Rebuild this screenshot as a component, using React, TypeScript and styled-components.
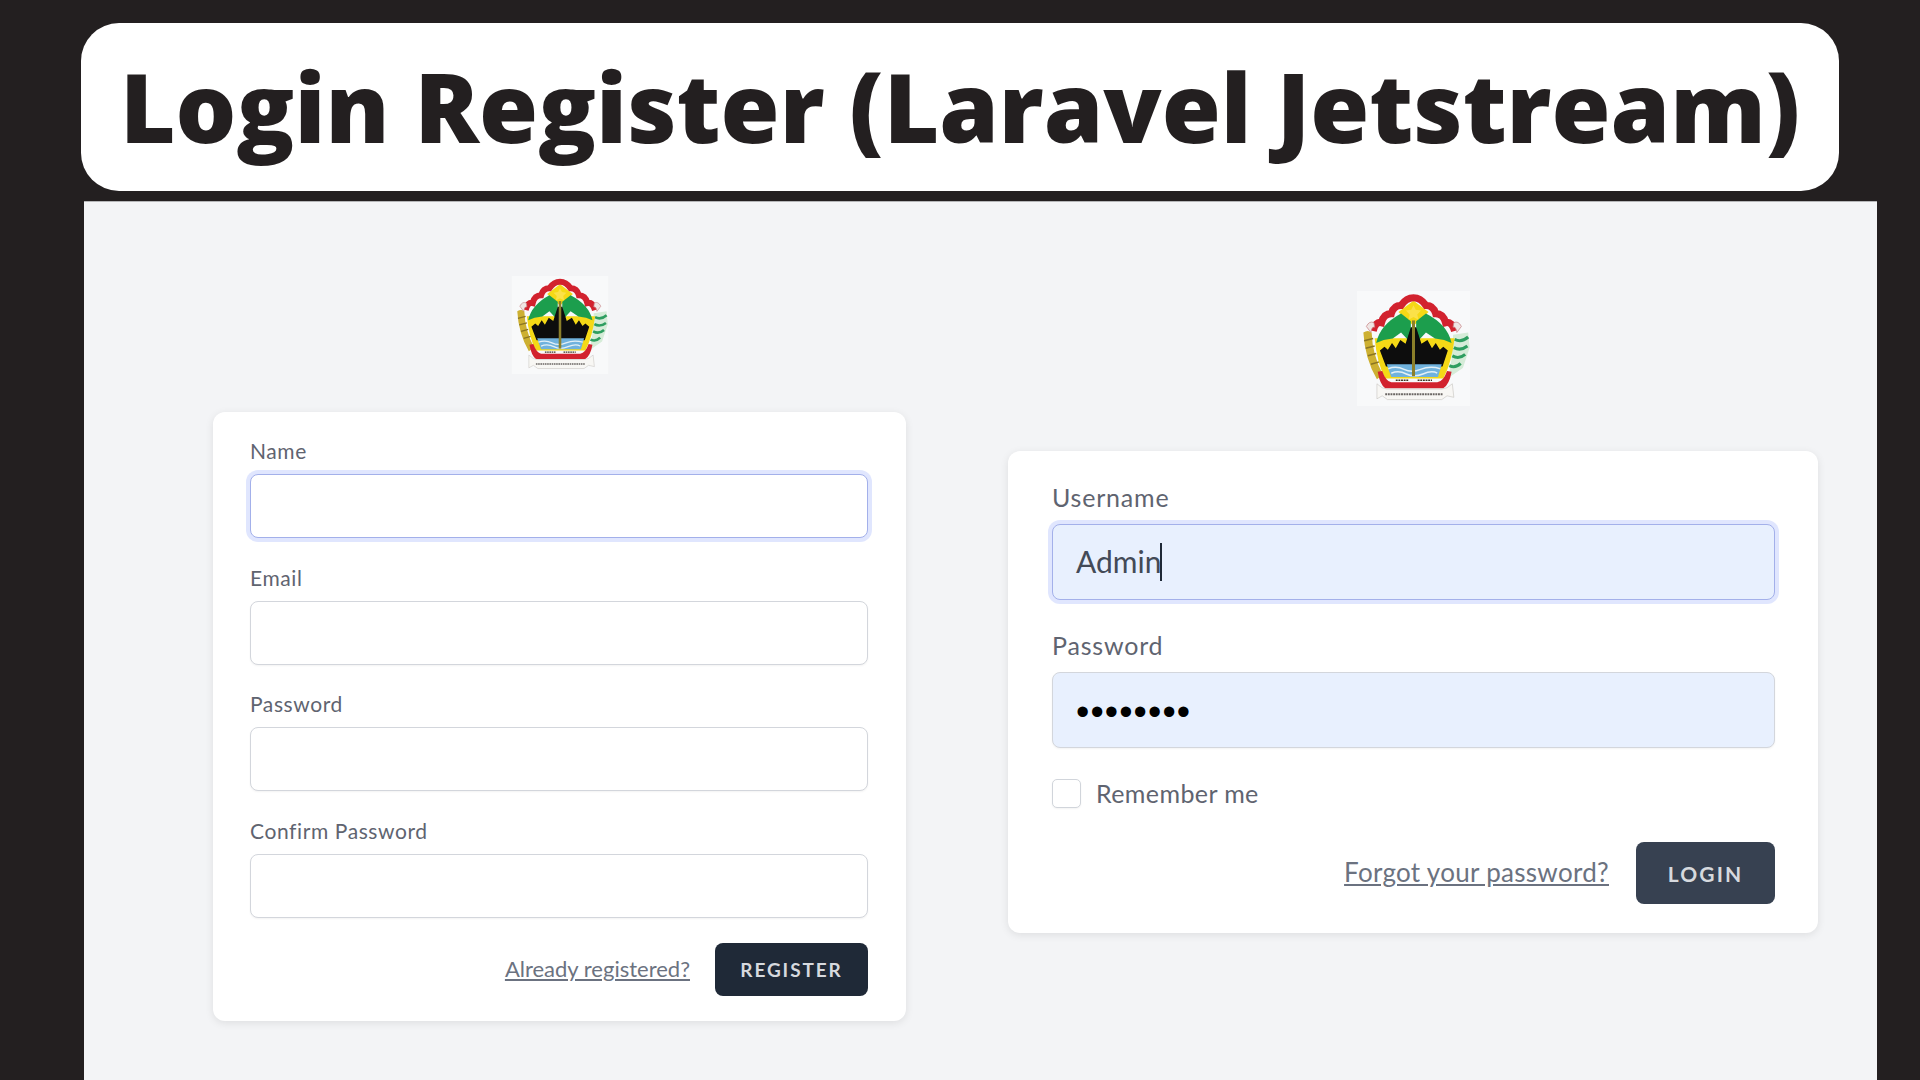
import React, { FC, useId } from 'react';
import styled, { createGlobalStyle } from 'styled-components';

const GlobalStyle = createGlobalStyle`
  html, body {
    margin: 0;
    height: 100%;
    background: #231f20;
    overflow: hidden;
  }
  * {
    box-sizing: border-box;
  }
`;

const Page = styled.div`
  width: 1920px;
  height: 1080px;
  padding-top: 23px;
  background: #231f20;
  overflow: hidden;
`;

const Banner = styled.div`
  width: 1758px;
  height: 168px;
  margin-left: 81px;
  border-radius: 38px;
  background: #fff;
  display: flex;
  align-items: center;
  justify-content: center;
`;

const Title = styled.h1`
  margin: 0;
  font-family: "Open Sans", sans-serif;
  font-weight: 800;
  font-size: 95.6px;
  line-height: 1;
  white-space: nowrap;
  color: #231f20;
`;

const Panel = styled.div`
  width: 1793px;
  height: 879px;
  margin: 10px 0 0 84px;
  padding-left: 129px;
  background: #f3f4f6;
  border-top: 1px solid #b5b6b8;
  display: flex;
  align-items: flex-start;
  gap: 102px;
  font-family: "Lato", sans-serif;
`;

const Column = styled.div<{ $width: number; $top: number; $gap: number }>`
  width: ${p => p.$width}px;
  padding-top: ${p => p.$top}px;
  display: flex;
  flex-direction: column;
  align-items: center;
  gap: ${p => p.$gap}px;
`;

const Card = styled.div<{ $left: number; $right: number; $height: number }>`
  width: 100%;
  height: ${p => p.$height}px;
  padding: 0 ${p => p.$right}px 0 ${p => p.$left}px;
  background: #fff;
  border-radius: 12px;
  box-shadow: 0 2px 8px rgba(0, 0, 0, 0.09);
  display: flex;
  flex-direction: column;
`;

const Group = styled.div<{ $top: number; $gap: number }>`
  margin-top: ${p => p.$top}px;
  display: flex;
  flex-direction: column;
  gap: ${p => p.$gap}px;
`;

const Label = styled.label<{ $big?: boolean }>`
  font-size: ${p => (p.$big ? 25 : 21)}px;
  line-height: ${p => (p.$big ? 28 : 24)}px;
  letter-spacing: ${p => (p.$big ? 0.8 : 0.6)}px;
  color: #5f6470;
`;

const Field = styled.div<{ $big?: boolean; $focus?: boolean; $filled?: boolean }>`
  height: ${p => (p.$big ? 76 : 64)}px;
  padding: 0 23px;
  border-radius: 8px;
  border: 1.5px solid ${p => (p.$focus ? '#a3b0ea' : '#d3d6dc')};
  background: ${p => (p.$filled ? '#e8f0fe' : '#fff')};
  box-shadow: ${p => (p.$focus ? '0 0 0 4px rgba(199, 210, 254, 0.55)' : '0 1px 2px rgba(0, 0, 0, 0.05)')};
  display: flex;
  align-items: center;
  font-size: 30px;
  color: #434a57;
`;

const FieldText = styled.span`
  margin-bottom: 2px;
`;

const Caret = styled.span`
  width: 2px;
  height: 38px;
  margin-left: -1px;
  background: #1f2937;
`;

const Dots = styled.span`
  margin-top: 4px;
  font-family: "Liberation Sans", sans-serif;
  font-size: 38px;
  letter-spacing: 1.1px;
  color: #000;
`;

const RememberRow = styled.div`
  margin-top: 30px;
  display: flex;
  align-items: center;
  gap: 15px;
`;

const Checkbox = styled.span`
  width: 29px;
  height: 29px;
  border-radius: 5px;
  border: 1.5px solid #d1d5db;
  background: #fff;
  box-shadow: 0 1px 2px rgba(0, 0, 0, 0.05);
`;

const RememberText = styled.span`
  font-size: 25px;
  letter-spacing: 0.4px;
  color: #5f6470;
`;

const Actions = styled.div<{ $top: number; $gap: number }>`
  margin-top: ${p => p.$top}px;
  display: flex;
  align-items: center;
  justify-content: flex-end;
  gap: ${p => p.$gap}px;
`;

const TextLink = styled.a<{ $big?: boolean }>`
  margin-bottom: 3px;
  font-size: ${p => (p.$big ? 26 : 22)}px;
  letter-spacing: ${p => (p.$big ? 0.3 : 0)}px;
  color: #6b7280;
  text-decoration: underline;
  text-underline-offset: 2px;
  white-space: nowrap;
`;

const Button = styled.button<{ $width: number; $height: number; $bg: string; $size: number }>`
  width: ${p => p.$width}px;
  height: ${p => p.$height}px;
  border: 0;
  border-radius: 8px;
  background: ${p => p.$bg};
  color: #d6d9de;
  font-family: "Lato", sans-serif;
  font-weight: 700;
  font-size: ${p => p.$size}px;
  letter-spacing: 0.1em;
  padding: 0;
`;

const LogoSvg = styled.svg<{ $size: number }>`
  width: ${p => p.$size}px;
  height: ${p => p.$size}px;
  display: block;
`;

const Logo: FC<{ size: number }> = ({ size }) => {
  const blurId = useId();
  return (
    <LogoSvg $size={size} viewBox="55 40 300 305">
      <defs>
        <filter id={blurId} x="-5%" y="-5%" width="110%" height="110%">
          <feGaussianBlur stdDeviation="1.8" />
        </filter>
      </defs>
      <rect x="55" y="40" width="300" height="305" fill="#f8f9fa" />
      <g filter={`url(#${blurId})`}>
        {/* rice stalk */}
        <path d="M72 150 Q84 142 94 150 Q96 210 124 262 L108 274 Q76 220 72 150Z" fill="#cdb030" />
        <path d="M74 172 L98 166 M78 192 L102 186 M84 212 L106 206 M92 234 L114 228" stroke="#8a7424" strokeWidth="4" />
        {/* cotton */}
        <path d="M310 156 L350 150 L354 190 L336 244 L298 270 L306 220Z" fill="#d6ecd8" />
        <path d="M314 168 Q332 178 350 162 M312 190 Q330 200 348 186 M308 212 Q326 222 342 208 M300 238 Q316 246 330 232" stroke="#2f9e60" strokeWidth="8" fill="none" />
        {/* yellow body */}
        <path d="M102 165 Q108 230 130 272 L284 272 Q306 230 314 165Z" fill="#f5d916" />
        <path d="M165 96 L205 66 L245 96 L205 132Z" fill="#f5d916" />
        {/* scalloped red band */}
        <path
          d="M98 146 Q104 120 120 124 Q126 100 146 100 Q152 78 172 78 Q186 58 205 58 Q224 58 238 78 Q258 78 264 100 Q284 100 290 124 Q306 120 314 146"
          stroke="#d2232f"
          strokeWidth="19"
          fill="none"
        />
        <path d="M80 134 Q88 118 100 124 L102 136 Q94 134 92 150 Z M332 134 Q324 118 312 124 L310 136 Q318 134 320 150 Z" fill="#efe6e4" stroke="#c9878a" strokeWidth="2" />
        {/* green mountains */}
        <path d="M106 178 Q116 130 172 100 L198 120 L198 178 L172 150 L150 166 L126 170Z" fill="#1f9e4e" />
        <path d="M306 178 Q296 130 238 100 L212 120 L212 178 L238 150 L262 166 L286 170Z" fill="#1f9e4e" />
        {/* black ground */}
        <path d="M116 198 L128 188 L137 196 L148 178 L158 192 L170 170 L184 180 L198 136 L212 136 L226 180 L242 170 L254 192 L264 178 L275 196 L284 188 L296 198 L282 240 L132 240Z" fill="#0a0a0a" />
        {/* water */}
        <path d="M134 234 L280 234 L270 268 L146 268Z" fill="#6fb2dd" />
        <path d="M138 246 Q160 238 180 248 T224 248 T276 246 M146 258 Q166 250 186 260 T230 260 T268 258" stroke="#e3f0f7" strokeWidth="4" fill="none" />
        {/* mast and star */}
        <rect x="201" y="118" width="8" height="148" fill="#8b7f2c" />
        <path d="M205 78 L211 90 L225 92 L215 102 L218 116 L205 109 L192 116 L195 102 L185 92 L199 90Z" fill="#fbe14a" />
        {/* text band */}
        <path d="M158 277 H192 M216 277 H254" stroke="#3a3420" strokeWidth="4" strokeDasharray="5 2" />
        {/* lower red band */}
        <path d="M110 254 L122 252 Q132 280 146 282 L268 282 Q284 280 294 252 L306 254 Q300 288 284 298 L130 298 Q116 288 110 254Z" fill="#d2232f" />
        {/* ribbon */}
        <path d="M108 286 Q122 300 134 300 L280 300 Q294 300 308 286 L312 322 L294 318 L280 328 L136 328 L122 318 L108 326Z" fill="#f8f7f4" stroke="#c2bfb9" strokeWidth="1.5" />
        <path d="M130 314 H284" stroke="#6a6663" strokeWidth="5" strokeDasharray="5 2" />
      </g>
    </LogoSvg>
  );
};

const LabeledField: FC<{ label: string; top: number; big?: boolean; focus?: boolean; filled?: boolean; children?: React.ReactNode }> = ({
  label,
  top,
  big,
  focus,
  filled,
  children,
}) => (
  <Group $top={top} $gap={big ? 13 : 11}>
    <Label $big={big}>{label}</Label>
    <Field $big={big} $focus={focus} $filled={filled}>
      {children}
    </Field>
  </Group>
);

export default function App() {
  return (
    <Page>
      <GlobalStyle />
      <Banner>
        <Title>Login Register (Laravel Jetstream)</Title>
      </Banner>
      <Panel>
        <Column $width={693} $top={74} $gap={38}>
          <Logo size={98} />
          <Card $left={37} $right={38} $height={609}>
            <LabeledField label="Name" top={27} focus />
            <LabeledField label="Email" top={28} />
            <LabeledField label="Password" top={27} />
            <LabeledField label="Confirm Password" top={28} />
            <Actions $top={25} $gap={25}>
              <TextLink>Already registered?</TextLink>
              <Button $width={153} $height={53} $bg="#1f2937" $size={19}>
                REGISTER
              </Button>
            </Actions>
          </Card>
        </Column>
        <Column $width={810} $top={89} $gap={45}>
          <Logo size={115} />
          <Card $left={44} $right={43} $height={482}>
            <LabeledField label="Username" top={32} big focus filled>
              <FieldText>Admin</FieldText>
              <Caret />
            </LabeledField>
            <LabeledField label="Password" top={31} big filled>
              <Dots>••••••••</Dots>
            </LabeledField>
            <RememberRow>
              <Checkbox />
              <RememberText>Remember me</RememberText>
            </RememberRow>
            <Actions $top={34} $gap={27}>
              <TextLink $big>Forgot your password?</TextLink>
              <Button $width={139} $height={62} $bg="#374151" $size={21}>
                LOGIN
              </Button>
            </Actions>
          </Card>
        </Column>
      </Panel>
    </Page>
  );
}
